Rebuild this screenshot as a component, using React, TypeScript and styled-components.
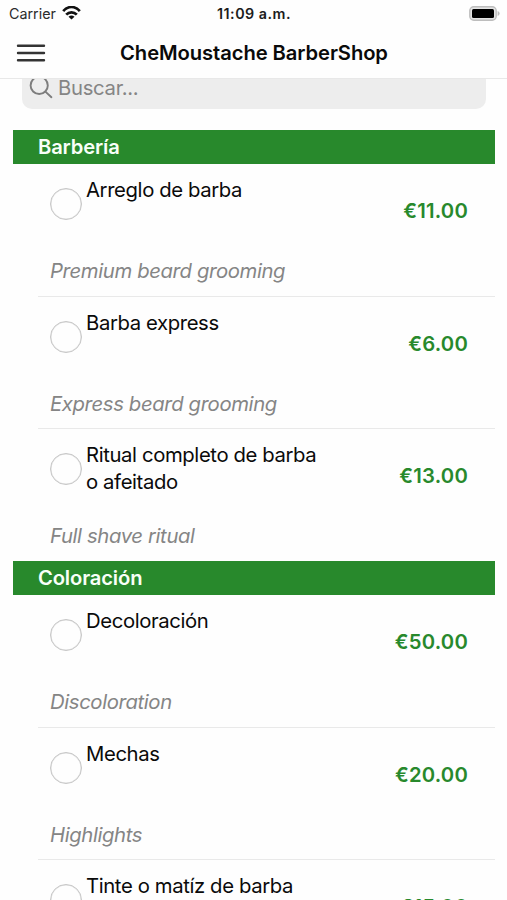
import React from "react";
import styled, { createGlobalStyle } from "styled-components";

const GlobalStyle = createGlobalStyle`
  * { box-sizing: border-box; }
  html, body { margin: 0; padding: 0; overflow: hidden; }
  body {
    background: #fefefe;
    color: #0a0a0a;
    font-family: Inter, "Liberation Sans", sans-serif;
    font-size: 20.3px;
  }
`;

const Screen = styled.div`
  width: 507px;
  height: 900px;
  overflow: hidden;
  display: flex;
  flex-direction: column;
`;

const StatusBar = styled.div`
  height: 27px;
  flex: none;
  display: grid;
  grid-template-columns: 1fr auto 1fr;
  align-items: center;
  padding: 1px 7px 0 9px;
  font-size: 14.3px;
  line-height: 20px;
`;

const Carrier = styled.div`
  display: flex;
  align-items: center;
  gap: 6px;
  color: #2b2b2b;
`;

const WifiSlot = styled.span`
  display: flex;
  margin-top: -2px;
`;

const Clock = styled.div`
  font-weight: 600;
  letter-spacing: 0.5px;
  margin-right: 1px;
  color: #1c1c1c;
`;

const BatterySlot = styled.div`
  display: flex;
  justify-content: flex-end;
  margin-top: -2px;
`;

const NavBar = styled.header`
  height: 52px;
  flex: none;
  display: grid;
  grid-template-columns: 60px 1fr 60px;
  align-items: center;
  border-bottom: 1px solid #e8e8e8;
`;

const MenuButton = styled.button`
  display: flex;
  padding: 0;
  margin-left: 16px;
  border: 0;
  background: none;
`;

const Title = styled.h1`
  margin: 0;
  padding-left: 1px;
  text-align: center;
  white-space: nowrap;
  font-size: 20.2px;
  line-height: 26px;
  font-weight: 600;
  letter-spacing: -0.08px;
`;

const Content = styled.main`
  flex: 1;
  min-height: 0;
  overflow: hidden;
`;

const SearchField = styled.div`
  height: 41px;
  margin: -11px 21px 21px 22px;
  padding: 0 7px 3px;
  border-radius: 10px;
  background: #ededed;
  color: #858585;
  display: flex;
  align-items: center;
  gap: 5px;
  letter-spacing: -0.3px;
`;

const Section = styled.section`
  margin: 0 12px 0 13px;
`;

const SectionTitle = styled.h2`
  margin: 0;
  height: 34.3px;
  padding-left: 25px;
  background: #28892c;
  color: #f8fff8;
  font-size: 20.2px;
  font-weight: 600;
  line-height: 34px;
  letter-spacing: -0.15px;
`;

const Service = styled.article<{ $last?: boolean }>`
  height: 132.3px;
  margin-left: 25px;
  padding: 12px 27px 0 12px;
  border-bottom: 1px solid ${(p) => (p.$last ? "transparent" : "#e9e9e9")};
`;

const ServiceTop = styled.div`
  height: 81px;
  display: flex;
  align-items: flex-start;
`;

const Radio = styled.span`
  width: 32px;
  height: 32px;
  flex: none;
  margin: 12px 4px 0 0;
  border: 1px solid #c6c6c6;
  box-shadow: inset 0 0 0 0.5px #dcdcdc;
  border-radius: 50%;
`;

const Name = styled.div`
  width: 242px;
  line-height: 27px;
  letter-spacing: -0.38px;
`;

const Price = styled.div`
  flex: 1;
  margin-top: 21px;
  text-align: right;
  font-weight: 600;
  line-height: 27px;
  letter-spacing: 0.2px;
  color: #28892c;
`;

const Description = styled.div`
  line-height: 27px;
  font-style: italic;
  color: #858585;
  letter-spacing: -0.37px;
`;

const WifiIcon = () => (
  <svg width="19" height="15" viewBox="0 0 19 15" fill="none" stroke="#111" strokeWidth="2.7">
    <path d="M1.2 5.2C6-.4 13-.4 17.8 5.2" />
    <path d="M4.2 8.7C7.2 5.5 11.8 5.5 14.8 8.7" />
    <path d="M9.5 13.6 6.5 10.8Q9.5 8.4 12.5 10.8Z" fill="#111" stroke="none" />
  </svg>
);

const BatteryIcon = () => (
  <svg width="31" height="15" viewBox="0 0 31 15">
    <rect x="0.8" y="0.8" width="26.4" height="13.4" rx="4" fill="#e4e4e4" stroke="#bdbdbd" strokeWidth="1.4" />
    <rect x="3" y="3" width="22" height="9" rx="1.5" fill="#000" />
    <path d="M28.6 5v5q2-.8 2-2.5t-2-2.5Z" fill="#bdbdbd" />
  </svg>
);

const MenuIcon = () => (
  <svg width="30" height="20" viewBox="0 0 30 20" stroke="#333" strokeWidth="2.4" strokeLinecap="round">
    <path d="M2 2.7H28M2 10H28M2 17.3H28" />
  </svg>
);

const SearchIcon = () => (
  <svg width="24" height="24" viewBox="0 0 24 24" fill="none" stroke="#7d7d7d" strokeWidth="1.9" strokeLinecap="round">
    <circle cx="10.2" cy="10.4" r="8.6" />
    <path d="m16.4 16.6 6 5.6" />
  </svg>
);

const sections = [
  {
    title: "Barbería",
    services: [
      { name: "Arreglo de barba", price: "€11.00", description: "Premium beard grooming" },
      { name: "Barba express", price: "€6.00", description: "Express beard grooming" },
      { name: "Ritual completo de barba o afeitado", price: "€13.00", description: "Full shave ritual" },
    ],
  },
  {
    title: "Coloración",
    services: [
      { name: "Decoloración", price: "€50.00", description: "Discoloration" },
      { name: "Mechas", price: "€20.00", description: "Highlights" },
      { name: "Tinte o matíz de barba", price: "€15.00", description: "" },
    ],
  },
];

export default function App() {
  return (
    <>
      <GlobalStyle />
      <Screen>
        <StatusBar>
          <Carrier>
            Carrier
            <WifiSlot>
              <WifiIcon />
            </WifiSlot>
          </Carrier>
          <Clock>11:09 a.m.</Clock>
          <BatterySlot>
            <BatteryIcon />
          </BatterySlot>
        </StatusBar>
        <NavBar>
          <MenuButton aria-label="Menu">
            <MenuIcon />
          </MenuButton>
          <Title>CheMoustache BarberShop</Title>
        </NavBar>
        <Content>
          <SearchField>
            <SearchIcon />
            Buscar...
          </SearchField>
          {sections.map((section) => (
            <Section key={section.title}>
              <SectionTitle>{section.title}</SectionTitle>
              {section.services.map((service, i) => (
                <Service key={service.name} $last={i === section.services.length - 1}>
                  <ServiceTop>
                    <Radio />
                    <Name>{service.name}</Name>
                    <Price>{service.price}</Price>
                  </ServiceTop>
                  <Description>{service.description}</Description>
                </Service>
              ))}
            </Section>
          ))}
        </Content>
      </Screen>
    </>
  );
}
